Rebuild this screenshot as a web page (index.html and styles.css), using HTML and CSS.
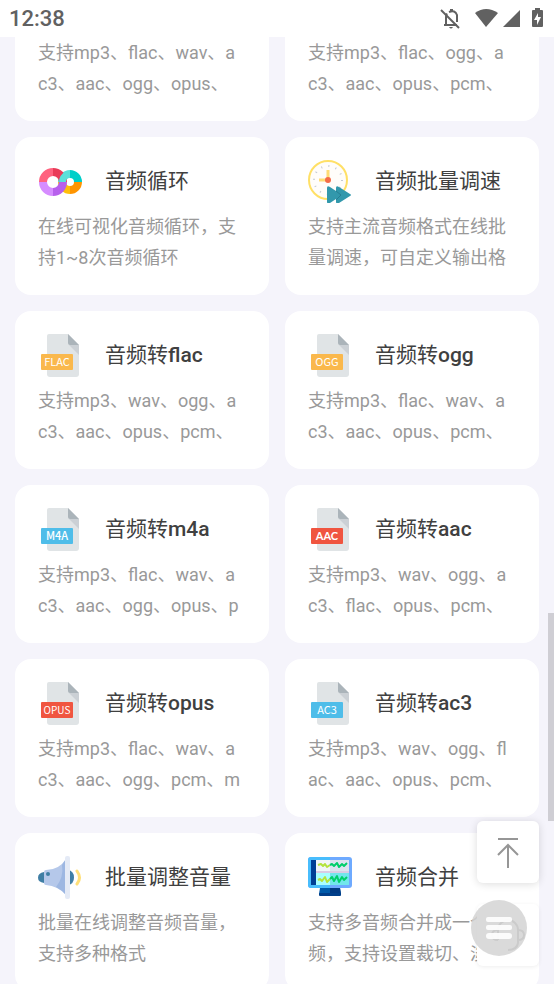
FILE: index.html
```html
<!DOCTYPE html>
<html lang="zh-CN">
<head>
<meta charset="utf-8">
<meta name="viewport" content="width=device-width, initial-scale=1">
<title>音频工具</title>
<link rel="stylesheet" href="styles.css">
</head>
<body>
<svg class="defs" aria-hidden="true">
  <symbol id="sheet" viewBox="0 0 44 44">
    <path d="M11 1h19l11 11v29a3 3 0 0 1-3 3H12a3 3 0 0 1-3-3V3a2 2 0 0 1 2-2z" fill="#e0e4e6"/>
    <path d="M31 12l10 10V12z" fill="#cbd0d5"/>
    <path d="M30 1l11 11h-9a2 2 0 0 1-2-2z" fill="#abb4ba"/>
  </symbol>
</svg>
<header class="status">
  <time class="clock">12:38</time>
  <svg class="status-icons" viewBox="0 0 104 24" width="104" height="24" fill="#616161" aria-hidden="true">
    <g fill="none" stroke="#616161" stroke-width="2">
      <path d="M4 18h13M6 17V10q0-2 1-3.500M9 5q6-2.500 8 3v7"/>
      <path d="M1 3l18 18"/>
    </g>
    <path d="M10 2h3v3h-3zM9 20h4q-2 3-4 0z"/>
    <path d="M35 6q11-8 23 0L46 20z"/>
    <path d="M80 3v17H63z"/>
    <path fill-rule="evenodd" d="M93 3h2V1h5v2h2q1 0 1 1v15q0 1-1 1h-9q-1 0-1-1V4q0-1 1-1zM98 6l-4 7h3v5l4-8h-3z"/>
  </svg>
</header>
<main class="content">
  <div class="grid">
    <a class="card" href="#">
      <span class="head"><svg class="icon" viewBox="0 0 44 44" aria-hidden="true"><use href="#sheet"/></svg></span>
      <span class="desc">支持mp3、flac、wav、a<br>c3、aac、ogg、opus、</span>
    </a>
    <a class="card" href="#">
      <span class="head"><svg class="icon" viewBox="0 0 44 44" aria-hidden="true"><use href="#sheet"/></svg></span>
      <span class="desc">支持mp3、flac、ogg、a<br>c3、aac、opus、pcm、</span>
    </a>
    <a class="card" href="#">
      <span class="head">
        <svg class="icon" viewBox="0 0 44 44" fill="none" aria-hidden="true">
          <g stroke-width="8">
            <path d="M24 23a8 8 0 0 1 8-8" stroke="#5be0da"/>
            <path d="M32 15a8 8 0 0 1 8 8" stroke="#00cfc9"/>
            <path d="M40 23a8 8 0 0 1-8 8" stroke="#ff9500"/>
            <path d="M32 31a8 8 0 0 1-8-8" stroke="#ffbe0b"/>
          </g>
          <g stroke-width="8">
            <path d="M5 23A10 10 0 0 1 15 13" stroke="#ff627f"/>
            <path d="M15 13A10 10 0 0 1 25 23" stroke="#e93b58"/>
            <path d="M25 23A10 10 0 0 1 15 33" stroke="#b760ec"/>
            <path d="M15 33A10 10 0 0 1 5 23" stroke="#d68cff"/>
          </g>
          <path d="M21 23q0-7 7-11l4 6q-4 1-4 5z" fill="#5be0da"/>
        </svg>
        <strong class="title">音频循环</strong>
      </span>
      <span class="desc">在线可视化音频循环，支<br>持1~8次音频循环</span>
    </a>
    <a class="card" href="#">
      <span class="head">
        <svg class="icon" viewBox="0 0 44 44" aria-hidden="true">
          <circle cx="20" cy="21" r="19" fill="#fffdfa" stroke="#ffe066" stroke-width="2"/>
          <circle cx="20" cy="21" r="14" fill="none" stroke="#c4c9d1" stroke-width="2" stroke-dasharray="1 6.330"/>
          <path d="M20 11v10h-9" fill="none" stroke="#ffdc73" stroke-width="3"/>
          <circle cx="20" cy="21" r="3" fill="#f56d49"/>
          <path d="M19 29q0-3 3-1l6 4v-3q0-3 3-1l11 7q2 1 0 2l-11 7q-3 1-3-1v-3l-6 4q-3 1-3-1z" fill="#3298ac"/>
          <path d="M28 32l5 4-5 5" fill="none" stroke="#267f93"/>
        </svg>
        <strong class="title">音频批量调速</strong>
      </span>
      <span class="desc">支持主流音频格式在线批<br>量调速，可自定义输出格</span>
    </a>
    <a class="card" href="#">
      <span class="head">
        <svg class="icon" viewBox="0 0 44 44" aria-hidden="true"><use href="#sheet"/><rect class="tag amber" x="3" y="21" width="32" height="16" rx="1"/><text class="tag-text" x="19" y="33">FLAC</text></svg>
        <strong class="title">音频转<span class="latin">flac</span></strong>
      </span>
      <span class="desc">支持mp3、wav、ogg、a<br>c3、aac、opus、pcm、</span>
    </a>
    <a class="card" href="#">
      <span class="head">
        <svg class="icon" viewBox="0 0 44 44" aria-hidden="true"><use href="#sheet"/><rect class="tag amber" x="3" y="21" width="32" height="16" rx="1"/><text class="tag-text" x="19" y="33">OGG</text></svg>
        <strong class="title">音频转<span class="latin">ogg</span></strong>
      </span>
      <span class="desc">支持mp3、flac、wav、a<br>c3、aac、opus、pcm、</span>
    </a>
    <a class="card" href="#">
      <span class="head">
        <svg class="icon" viewBox="0 0 44 44" aria-hidden="true"><use href="#sheet"/><rect class="tag blue" x="3" y="21" width="32" height="16" rx="1"/><text class="tag-text strong" x="19" y="33">M4A</text></svg>
        <strong class="title">音频转<span class="latin">m4a</span></strong>
      </span>
      <span class="desc">支持mp3、flac、wav、a<br>c3、aac、ogg、opus、p</span>
    </a>
    <a class="card" href="#">
      <span class="head">
        <svg class="icon" viewBox="0 0 44 44" aria-hidden="true"><use href="#sheet"/><rect class="tag red" x="3" y="21" width="32" height="16" rx="1"/><text class="tag-text heavy" x="19" y="33">AAC</text></svg>
        <strong class="title">音频转<span class="latin">aac</span></strong>
      </span>
      <span class="desc">支持mp3、wav、ogg、a<br>c3、flac、opus、pcm、</span>
    </a>
    <a class="card" href="#">
      <span class="head">
        <svg class="icon" viewBox="0 0 44 44" aria-hidden="true"><use href="#sheet"/><rect class="tag red" x="3" y="21" width="32" height="16" rx="1"/><text class="tag-text small" x="19" y="33">OPUS</text></svg>
        <strong class="title">音频转<span class="latin">opus</span></strong>
      </span>
      <span class="desc">支持mp3、flac、wav、a<br>c3、aac、ogg、pcm、m</span>
    </a>
    <a class="card" href="#">
      <span class="head">
        <svg class="icon" viewBox="0 0 44 44" aria-hidden="true"><use href="#sheet"/><rect class="tag blue" x="3" y="21" width="32" height="16" rx="1"/><text class="tag-text" x="19" y="33">AC3</text></svg>
        <strong class="title">音频转<span class="latin">ac3</span></strong>
      </span>
      <span class="desc">支持mp3、wav、ogg、fl<br>ac、aac、opus、pcm、</span>
    </a>
    <a class="card" href="#">
      <span class="head">
        <svg class="icon" viewBox="0 0 44 44" aria-hidden="true">
          <path d="M6 17q-6 1-6 5.500T6 28z" fill="#3f7ea5"/>
          <path d="M30 15q6 1 6 7.500T30 30z" fill="#3f7ea5"/>
          <path d="M8 15q13 0 20-11v36Q20 31 8 30q-2 0-2-2V17q0-2 2-2z" fill="#b5c8ea"/>
          <path d="M28 4v36q-4-5-10-8 8-10 6-22z" fill="#9db7e2"/>
          <rect x="27" y="1" width="5" height="43" rx="2" fill="#e4eaf6"/>
          <circle cx="10" cy="19" r="2" fill="#3f7ea5"/>
          <path d="M39 16q5 7 0 13" fill="none" stroke="#ffdf78" stroke-width="3" stroke-linecap="round"/>
        </svg>
        <strong class="title">批量调整音量</strong>
      </span>
      <span class="desc">批量在线调整音频音量，<br>支持多种格式</span>
    </a>
    <a class="card" href="#">
      <span class="head">
        <svg class="icon" viewBox="0 0 44 44" aria-hidden="true">
          <path d="M12 33h20l1 6H11z" fill="#005aa9"/>
          <path d="M22 33h10l1 6H22z" fill="#003a83"/>
          <rect x="11" y="38" width="22" height="3" rx="1" fill="#003f8a"/>
          <rect x="0" y="2" width="44" height="31" rx="3" fill="#6eaaff"/>
          <path d="M3 2h19v31H3a3 3 0 0 1-3-3V5a3 3 0 0 1 3-3z" fill="#48bdfd"/>
          <rect x="3" y="5" width="5" height="25" fill="#003f95"/>
          <rect x="8" y="5" width="14" height="12" fill="#f2f5f8"/>
          <rect x="22" y="5" width="19" height="12" fill="#dce3ef"/>
          <rect x="8" y="17" width="14" height="13" fill="#a8ffff"/>
          <rect x="22" y="17" width="19" height="13" fill="#72e6eb"/>
          <path d="M8 17h33" stroke="#d9cce4" stroke-width="2"/>
          <g fill="none" stroke-width="2" stroke-linejoin="round">
            <path d="M10 10l3-1 2 2 2-2 2 3 3-2M10 25l2-1 2 2 3-4 2 5 3-3" stroke="#b4e33d"/>
            <path d="M22 10l2-1 2 2 3-3 2 4 3-3 2 2 3-3M22 24l2-2 2 4 3-5 2 6 3-5 2 3 3-3" stroke="#00cf6b"/>
          </g>
        </svg>
        <strong class="title">音频合并</strong>
      </span>
      <span class="desc">支持多音频合并成一个音<br>频，支持设置裁切、淡</span>
    </a>
  </div>
</main>
<div class="scroll-thumb"></div>
<div class="tools">
  <button class="tool raised" type="button" aria-label="返回顶部">
    <svg width="24" height="32" viewBox="0 0 24 32" fill="none" stroke="#969696" stroke-width="2" aria-hidden="true"><path d="M2 3h20M12 32V9M2 19L12 9l10 10"/></svg>
  </button>
  <button class="tool" type="button" aria-label="在线客服">
    <svg width="34" height="34" viewBox="0 0 34 34" fill="none" stroke="#969696" stroke-width="2" aria-hidden="true"><path d="M7 22V12a10 10 0 0 1 20 0v13q-1 7-10 7M7 12q-6 0-6 5t6 5M27 12q6 0 6 5t-6 5"/></svg>
  </button>
</div>
<button class="menu" type="button" aria-label="菜单">
  <svg width="56" height="56" viewBox="0 0 56 56" fill="#fff" fill-opacity=".9" aria-hidden="true">
    <rect x="15" y="17" width="26" height="5" rx="2"/><rect x="15" y="25" width="26" height="5" rx="2"/><rect x="15" y="33" width="26" height="6" rx="3"/>
  </svg>
</button>
</body>
</html>
```
FILE: styles.css
```css
* { box-sizing: border-box; }
body {
  margin: 0;
  height: 100vh;
  display: flex;
  flex-direction: column;
  overflow: hidden;
  background: #f5f4fb;
  font-family: Roboto, "Noto Sans CJK SC", sans-serif;
}
.defs { position: absolute; width: 0; height: 0; }
.status {
  flex: none;
  height: 37px;
  padding: 0 10px 0 9px;
  display: flex;
  align-items: center;
  justify-content: space-between;
  background: #fff;
  z-index: 1;
}
.clock { font-size: 22px; line-height: 26px; font-weight: 500; color: #616161; }
.content { flex: 1; min-height: 0; overflow: hidden; }
.grid {
  display: grid;
  grid-template-columns: 1fr 1fr;
  gap: 16px;
  padding: 0 15px;
  margin-top: -74px;
}
.card {
  display: block;
  min-width: 0;
  padding: 22px 23px;
  background: #fff;
  border-radius: 16px;
  color: #999;
  text-decoration: none;
}
.head { display: flex; align-items: center; gap: 23px; height: 44px; }
.icon { flex: none; width: 44px; height: 44px; }
.title { font-size: 21px; line-height: 32px; font-weight: 400; color: #404040; white-space: nowrap; }
.latin { font-weight: 500; }
.desc {
  display: block;
  margin-top: 8px;
  height: 62px;
  overflow: hidden;
  font-size: 18px;
  line-height: 31px;
  font-weight: 400;
  white-space: nowrap;
}
.amber { fill: #fab84c; }
.blue { fill: #4fbde9; }
.red { fill: #f05540; }
.tag-text { font-family: "Noto Sans CJK SC", sans-serif; font-size: 11px; fill: #fff; text-anchor: middle; }
.tag-text.strong { font-weight: 500; }
.tag-text.heavy { font-family: Lato, sans-serif; font-weight: 700; }
.tag-text.small { font-size: 10px; }
.scroll-thumb {
  position: fixed;
  right: 0;
  top: 613px;
  width: 6px;
  height: 208px;
  background: #cfced4;
}
.tools {
  position: fixed;
  right: 15px;
  bottom: 18px;
  display: flex;
  flex-direction: column;
  gap: 21px;
}
.tool {
  width: 62px;
  height: 62px;
  padding: 0;
  display: grid;
  place-items: center;
  border: 0;
  border-radius: 6px;
  background: #fff;
  box-shadow: 0 1px 4px rgba(0, 0, 0, 0.07);
}
.tool.raised { box-shadow: 0 1px 8px rgba(0, 0, 0, 0.14); }
.menu {
  position: fixed;
  right: 27px;
  bottom: 28px;
  width: 56px;
  height: 56px;
  padding: 0;
  border: 0;
  border-radius: 50%;
  background: rgba(212, 212, 212, 0.86);
}
.menu svg { display: block; }
```
